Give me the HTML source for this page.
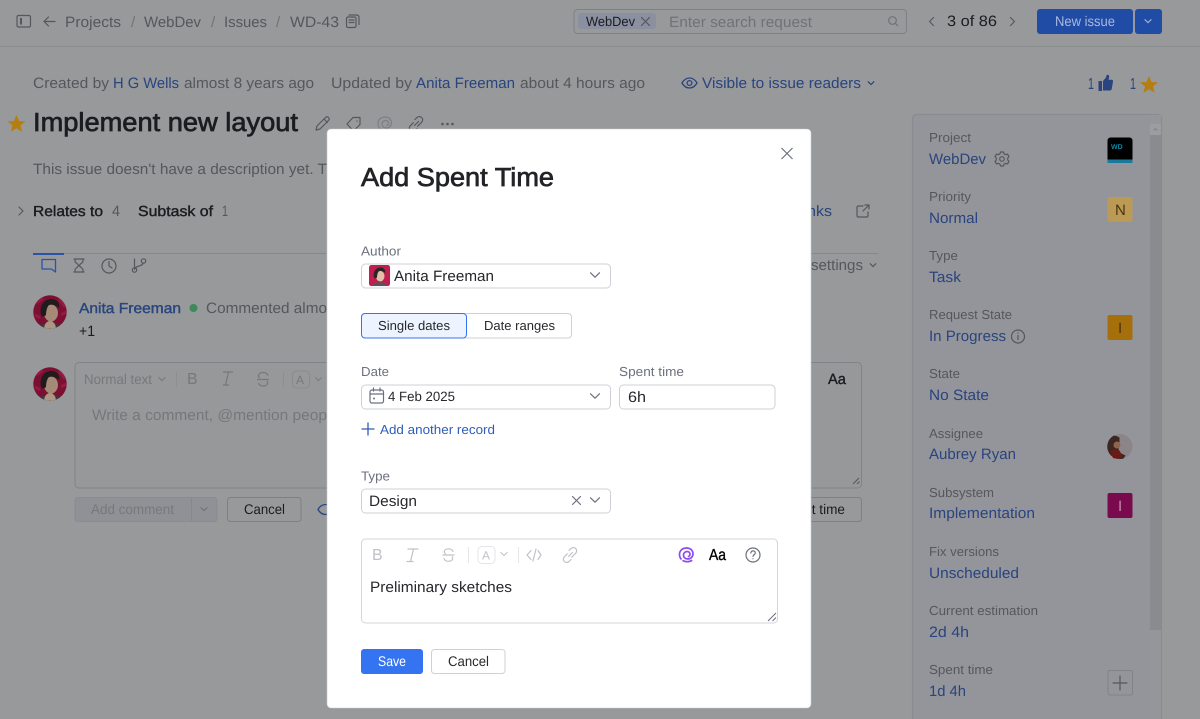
<!DOCTYPE html>
<html lang="en">
<head>
<meta charset="utf-8">
<title>Add Spent Time</title>
<style>
html,body{margin:0;padding:0;width:1200px;height:719px;overflow:hidden;background:#98999a}
svg{display:block}
text{font-family:"Liberation Sans",sans-serif;font-size:15px;fill:#47494d;text-rendering:geometricPrecision}
.d{fill:#4b4d52}.l{fill:#29447f}.g{fill:#55575c}.f{fill:#707277}.k{fill:#1b1c1f}
.b{stroke-width:.4px;paint-order:stroke}.s{font-size:14px}.t{font-size:13px}
.m{fill:#27282c}.ml{fill:#6c707e;font-size:13px}.ma{fill:#2f5cb8}
.i{fill:none;stroke:#55575c;stroke-width:1.2;stroke-linecap:round;stroke-linejoin:round}
.il{fill:none;stroke:#6f7176;stroke-width:1.2}
.ic{fill:none;stroke:#6c707e;stroke-width:1.2;stroke-linecap:round;stroke-linejoin:round}
.id{fill:none;stroke:#c0c2c8;stroke-width:1.2;stroke-linecap:round;stroke-linejoin:round}
</style>
</head>
<body>
<svg width="1200" height="719" viewBox="0 0 1200 719" xmlns="http://www.w3.org/2000/svg">
<defs>
<path id="ch" d="M-4.500-2.200L0 2.200 4.500-2.200"/>
<polygon id="star" points="0,-9 2.600,-2.900 9,-2.800 4,1.400 5.600,7.700 0,4.200 -5.600,7.700 -4,1.400 -9,-2.800 -2.600,-2.900" fill="#b57f10"/>
<path id="spi" d="M3 12.500C1.500 11 1 9.500 1 7.500 1 3.500 4 1 8 1c3.800 0 6.500 2.500 6.500 5.800 0 3-2.300 5.200-5.200 5.200-2.500 0-4.300-1.600-4.300-3.900C5 6 6.700 4.500 8.600 4.500c1.600 0 2.900 1.100 2.900 2.700 0 1.300-1 2.300-2.300 2.300M4 13.300c1.200.9 2.800 1.400 4.700 1.400 2 0 3.800-.6 5-1.500"/>
<path id="lnk" d="M6.500 9.500l4-4M7 3.500l2-2c1.500-1.300 3.500-1.200 4.700 0s1.300 3.200 0 4.700l-4 4M9 12.500l-2 2c-1.500 1.300-3.500 1.200-4.700 0S1 11.300 2.300 9.800l3-3"/>
<g id="face">
<rect width="34" height="34" fill="#7c1032"/>
<path d="M3 8L10 3M26 4l6 8M2 20l5 3M28 20l5-3" stroke="#931a41" stroke-width="3"/>
<path d="M5 34c1-5 6-6 12-6s11 1 12 6z" fill="#39393d"/>
<path d="M11 34c0-5 3-8 6-8s6 3 6 8z" fill="#ad9684"/>
<ellipse cx="18" cy="18" rx="7" ry="8.500" fill="#a58a78"/>
<path d="M8 20C6 11 11 4 18 4c6 0 9 4 8 9-3-3-7-4-10-3-2 2-3 6-3 10-2 2-4 2-5 0z" fill="#201c1d"/>
</g>
<clipPath id="c1"><circle cx="17" cy="17" r="16.700"/></clipPath>
<clipPath id="c2"><rect width="34" height="34" rx="4"/></clipPath>
</defs>

<!-- page background -->
<rect width="1200" height="719" fill="#98999a"/>
<rect y="46" width="1200" height="1" fill="#8b8c8e"/>

<!-- top bar -->
<rect class="i" x="17" y="15.500" width="13.500" height="11.500" rx="1.500"/><rect x="20" y="18" width="2" height="6.500" fill="#55575c"/>
<path class="i" d="M55 21.500H44M48.500 17L44 21.500 48.500 26"/>
<text class="g" x="65" y="27" textLength="56" lengthAdjust="spacingAndGlyphs">Projects</text>
<text class="f" x="131" y="27">/</text>
<text class="g" x="144" y="27" textLength="57" lengthAdjust="spacingAndGlyphs">WebDev</text>
<text class="f" x="211" y="27">/</text>
<text class="g" x="224" y="27" textLength="43" lengthAdjust="spacingAndGlyphs">Issues</text>
<text class="f" x="276" y="27">/</text>
<text class="g" x="290" y="27" textLength="49" lengthAdjust="spacingAndGlyphs">WD-43</text>
<rect class="i" x="346.500" y="17" width="9.500" height="10.500" rx="1.500"/><path class="i" d="M349 15h7.500q2.500 0 2.500 2.500v7M349 20h5M349 22.500h5"/>

<rect x="574" y="9.500" width="332.500" height="24" rx="3.500" fill="#98999b" stroke="#7f8184"/>
<rect x="578" y="13" width="78" height="16" rx="3" fill="#8a90a0"/>
<text class="k" x="586" y="26" style="font-size:13.500px" textLength="49" lengthAdjust="spacingAndGlyphs">WebDev</text>
<path class="i" d="M641.500 17.500l8 8M649.500 17.500l-8 8"/>
<text class="f" x="669" y="27" textLength="143" lengthAdjust="spacingAndGlyphs">Enter search request</text>
<circle class="il" cx="892.500" cy="20.500" r="3.800"/><path class="il" d="M895.300 23.300L898 26"/>

<path class="i" d="M933.500 17.500l-4 4 4 4"/>
<text class="k" x="947" y="26" textLength="50" lengthAdjust="spacingAndGlyphs">3 of 86</text>
<path class="i" d="M1010.500 17.500l4 4-4 4"/>

<rect x="1037" y="9" width="96" height="25" rx="3" fill="#204ca6"/>
<rect x="1135" y="9" width="27" height="25" rx="3" fill="#204ca6"/>
<text x="1055" y="26" style="fill:#a9b9dd;font-size:14px" textLength="60" lengthAdjust="spacingAndGlyphs">New issue</text>
<use href="#ch" transform="translate(1148 21) scale(.75)" fill="none" stroke="#a9b9dd" stroke-width="1.500"/>

<!-- meta row -->
<text class="g" x="33" y="88" textLength="76" lengthAdjust="spacingAndGlyphs">Created by</text>
<text class="l" x="113" y="88" textLength="66" lengthAdjust="spacingAndGlyphs">H G Wells</text>
<text class="g" x="184" y="88" textLength="130" lengthAdjust="spacingAndGlyphs">almost 8 years ago</text>
<text class="g" x="331" y="88" textLength="81" lengthAdjust="spacingAndGlyphs">Updated by</text>
<text class="l" x="416" y="88" textLength="99" lengthAdjust="spacingAndGlyphs">Anita Freeman</text>
<text class="g" x="520" y="88" textLength="125" lengthAdjust="spacingAndGlyphs">about 4 hours ago</text>
<path d="M682 83c2-3.500 4.500-5 7.500-5s5.500 1.500 7.500 5c-2 3.500-4.500 5-7.500 5s-5.500-1.500-7.500-5z" fill="none" stroke="#29447f" stroke-width="1.300"/><circle cx="689.500" cy="83" r="2.400" fill="none" stroke="#29447f" stroke-width="1.300"/>
<text class="l" x="702" y="88" textLength="159" lengthAdjust="spacingAndGlyphs">Visible to issue readers</text>
<use href="#ch" transform="translate(871 83) scale(.7)" fill="none" stroke="#29447f" stroke-width="1.800"/>
<text class="l" x="1088" y="89" style="font-size:16px" textLength="6" lengthAdjust="spacingAndGlyphs">1</text>
<path d="M1098.500 81h3.500v10h-3.500zM1103 81l3-3.500c.3-2 .7-2.800 1.700-2.800 1.300 0 1.800 1.500 1.300 3.300l-.5 1.800h3.200c1 0 1.500.8 1.300 1.800l-1.300 7.400c-.2 1-.8 1.500-1.700 1.500h-7z" fill="#29447f"/>
<text class="l" x="1130" y="89" style="font-size:16px" textLength="6" lengthAdjust="spacingAndGlyphs">1</text>
<use href="#star" x="1149" y="85"/>

<!-- title -->
<use href="#star" x="16.500" y="124"/>
<text class="k b" x="33" y="131" style="font-size:26px;stroke:#1b1c1f;stroke-width:.7px" textLength="265" lengthAdjust="spacingAndGlyphs">Implement new layout</text>
<path class="i" d="M316 130l1-4 8.500-8.500c1-1 2-1 3 0s1 2 0 3L320 129zM324 119l3.500 3.500"/>
<path class="i" d="M347 124l6-6.500h7v7l-6.500 6.500zM357 121v.1"/>
<use href="#spi" x="377" y="116" fill="none" stroke="#7c7e83" stroke-width="1.200"/>
<use href="#lnk" x="408" y="116" class="i"/>
<circle cx="442.500" cy="124" r="1.300" fill="#55575c"/><circle cx="447.500" cy="124" r="1.300" fill="#55575c"/><circle cx="452.500" cy="124" r="1.300" fill="#55575c"/>

<text class="g" x="33" y="174" textLength="294" lengthAdjust="spacingAndGlyphs">This issue doesn't have a description yet. T</text>

<path class="i" d="M19 207l4 4-4 4"/>
<text class="k b" x="33" y="216" style="font-size:14.500px;stroke:#1b1c1f" textLength="70" lengthAdjust="spacingAndGlyphs">Relates to</text>
<text class="g" x="112" y="216" textLength="8" lengthAdjust="spacingAndGlyphs">4</text>
<text class="k b" x="138" y="216" style="font-size:14.500px;stroke:#1b1c1f" textLength="75" lengthAdjust="spacingAndGlyphs">Subtask of</text>
<text class="g" x="222" y="216" textLength="6" lengthAdjust="spacingAndGlyphs">1</text>
<text class="l" x="800" y="216" textLength="32" lengthAdjust="spacingAndGlyphs">links</text>
<path class="i" d="M863 206h-4.500q-1.500 0-1.500 1.500v8q0 1.500 1.500 1.500h8q1.500 0 1.500-1.500V212M863 211l6-6M865 205h4v4"/>

<!-- tabs -->
<rect x="33" y="253" width="845" height="1" fill="#87888a"/>
<rect x="33" y="253" width="31" height="2" fill="#2a53a8"/>
<path d="M42 259.500h13.500v12.500l-4-3H42z" fill="none" stroke="#2a53a8" stroke-width="1.300" stroke-linejoin="round"/>
<path class="i" d="M74 259h10M74 272h10M75 259v2c0 2 3.500 3 3.500 4.500S75 268 75 270v2M83 259v2c0 2-3.500 3-3.500 4.500S83 268 83 270v2"/>
<circle class="i" cx="109" cy="266" r="7"/><path class="i" d="M109 261.500V266l3 2"/>
<circle class="i" cx="134.500" cy="270" r="2.200"/><circle class="i" cx="143.500" cy="261" r="2.200"/><path class="i" d="M134.500 259v8.500M143 263.500c-.5 3-8 2-8.500 6"/>
<text class="g" x="811" y="270" textLength="52" lengthAdjust="spacingAndGlyphs">settings</text>
<use href="#ch" transform="translate(873 265) scale(.7)" fill="none" stroke="#55575c" stroke-width="1.800"/>

<!-- comment -->
<g transform="translate(33 295)" clip-path="url(#c1)"><use href="#face"/></g>
<text class="b" x="79" y="313" style="font-size:14.500px;fill:#29447f;stroke:#29447f" textLength="102" lengthAdjust="spacingAndGlyphs">Anita Freeman</text>
<circle cx="193.500" cy="308" r="4" fill="#3b8a57"/>
<text class="g" x="206" y="313" textLength="121" lengthAdjust="spacingAndGlyphs">Commented almo</text>
<text class="k" x="79" y="336" textLength="16" lengthAdjust="spacingAndGlyphs">+1</text>

<g transform="translate(33 367)" clip-path="url(#c1)"><use href="#face"/></g>
<rect x="75" y="362.500" width="786.500" height="125.500" rx="4" fill="#979899" stroke="#818386"/>
<text x="84" y="384" class="s" style="fill:#76787c" textLength="68" lengthAdjust="spacingAndGlyphs">Normal text</text>
<use href="#ch" transform="translate(162 379) scale(.75)" fill="none" stroke="#76787c" stroke-width="1.400"/>
<rect x="176" y="372" width="1" height="15" fill="#8d8e90"/>
<text x="187" y="384" style="fill:#76787c;font-size:16px">B</text>
<path d="M223 372h10M228.500 372l-3 13M223 385h6" fill="none" stroke="#76787c" stroke-width="1.200"/>
<path d="M268 375.500c-.8-2-2.800-3-5-3-2.600 0-4.500 1.200-4.500 3.200 0 1 .4 1.800 1.200 2.300M257 379.500h12M258.500 383c.5 1.800 2.300 3 4.500 3 2.600 0 4.500-1.200 4.500-3.200 0-.8-.2-1.300-.6-1.800" fill="none" stroke="#76787c" stroke-width="1.200"/>
<rect x="283" y="372" width="1" height="15" fill="#8d8e90"/>
<rect x="292.500" y="371" width="17" height="17" rx="4" fill="none" stroke="#8a8b8d"/>
<text x="296" y="384" style="fill:#76787c;font-size:12px">A</text>
<use href="#ch" transform="translate(318.500 379) scale(.7)" fill="none" stroke="#76787c" stroke-width="1.400"/>
<text x="92" y="420" style="fill:#75777c" textLength="235" lengthAdjust="spacingAndGlyphs">Write a comment, @mention peop</text>
<text class="k" x="828" y="384" style="font-size:15px;stroke:#1b1c1f;stroke-width:.35px" textLength="18" lengthAdjust="spacingAndGlyphs">Aa</text>
<path d="M853 484l6-6M857 484l2.500-2.500" stroke="#55575c" stroke-width="1"/>

<rect x="75" y="497.500" width="142" height="24" rx="3" fill="#909196" stroke="#8a8c90"/>
<rect x="191" y="498" width="1" height="23" fill="#85878a"/>
<text x="91" y="514" class="s" style="fill:#76787c" textLength="83" lengthAdjust="spacingAndGlyphs">Add comment</text>
<use href="#ch" transform="translate(204 509) scale(.75)" fill="none" stroke="#6e7074" stroke-width="1.400"/>
<rect x="227.500" y="497.500" width="73.500" height="24" rx="3" fill="#98999a" stroke="#7e8084"/>
<text class="k s" x="244" y="514" textLength="41" lengthAdjust="spacingAndGlyphs">Cancel</text>
<path d="M318 509.500c2-3.500 4.500-5 7.500-5s5.500 1.500 7.500 5c-2 3.500-4.500 5-7.500 5s-5.500-1.500-7.500-5z" fill="none" stroke="#29447f" stroke-width="1.300"/>
<rect x="780" y="497.500" width="81.500" height="24" rx="3" fill="#98999a" stroke="#7e8084"/>
<text class="k s" x="780" y="514" textLength="65" lengthAdjust="spacingAndGlyphs">Spent time</text>

<!-- sidebar -->
<rect x="912.500" y="114.500" width="249" height="620" rx="4" fill="#94959a" stroke="#8a8b90" stroke-width="1.200"/>
<rect x="1150" y="115" width="11" height="604" fill="#95969a"/>
<rect x="1150" y="124" width="11" height="11" fill="#9c9da1"/>
<path d="M1152.500 130.500l3-3 3 3z" fill="#8a8b8f"/>
<rect x="1150" y="135" width="11" height="495" fill="#8a8b8f"/>

<text class="g t" x="929" y="142" textLength="42" lengthAdjust="spacingAndGlyphs">Project</text>
<text class="l" x="929" y="164" textLength="57" lengthAdjust="spacingAndGlyphs">WebDev</text>
<g class="i"><circle cx="1002" cy="159" r="2.300"/><path d="M1000.500 152h3l.5 1.800 1.700.9 1.800-.6 1.500 2.600-1.300 1.300v2l1.300 1.300-1.500 2.600-1.800-.6-1.700.9-.5 1.800h-3l-.5-1.800-1.700-.9-1.800.6-1.500-2.600 1.300-1.300v-2l-1.300-1.300 1.500-2.600 1.800.6 1.700-.9z"/></g>
<rect x="1107.500" y="137.500" width="25" height="25.500" rx="3" fill="#000"/>
<rect x="1107.500" y="159.500" width="25" height="3.500" fill="#1a7a9c"/>
<text x="1111" y="149" style="font-size:7px;font-weight:bold;fill:#0f86a8">WD</text>

<text class="g t" x="929" y="201" textLength="42" lengthAdjust="spacingAndGlyphs">Priority</text>
<text class="l" x="929" y="223" textLength="49" lengthAdjust="spacingAndGlyphs">Normal</text>
<rect x="1107.500" y="197" width="25" height="25" rx="2" fill="#bb9a55"/>
<text x="1115" y="215" style="fill:#4a3510;font-size:15px">N</text>

<text class="g t" x="929" y="260" textLength="29" lengthAdjust="spacingAndGlyphs">Type</text>
<text class="l" x="929" y="282" textLength="32" lengthAdjust="spacingAndGlyphs">Task</text>

<text class="g t" x="929" y="319" textLength="83" lengthAdjust="spacingAndGlyphs">Request State</text>
<text class="l" x="929" y="341" textLength="77" lengthAdjust="spacingAndGlyphs">In Progress</text>
<circle class="i" cx="1018" cy="336.500" r="6.500"/><path class="i" d="M1018 335.500v4M1018 333v.1"/>
<rect x="1107.500" y="315" width="25" height="25" rx="2" fill="#a56f0b"/>
<text x="1118" y="333" style="fill:#4d3408;font-size:15px">I</text>

<text class="g t" x="929" y="378" textLength="31" lengthAdjust="spacingAndGlyphs">State</text>
<text class="l" x="929" y="400" textLength="60" lengthAdjust="spacingAndGlyphs">No State</text>

<text class="g t" x="929" y="438" textLength="54" lengthAdjust="spacingAndGlyphs">Assignee</text>
<text class="l" x="929" y="459" textLength="87" lengthAdjust="spacingAndGlyphs">Aubrey Ryan</text>
<circle cx="1120" cy="446.500" r="12.500" fill="#8c8587"/>
<path d="M1114 435.500a12.500 12.500 0 0 0-2.500 20.500c4 3 9 3.500 12 2.500l2-3-6-3-1-4 1-5 0-6a12 12 0 0 0-5.500-2z" fill="#3c2723"/>
<path d="M1110 451l5-2 5 2 2 6-4 2-5-1z" fill="#6c1a14"/><circle cx="1117" cy="445" r="3.500" fill="#8e6650"/>

<text class="g t" x="929" y="497" textLength="65" lengthAdjust="spacingAndGlyphs">Subsystem</text>
<text class="l" x="929" y="518" textLength="106" lengthAdjust="spacingAndGlyphs">Implementation</text>
<rect x="1107.500" y="493" width="25" height="25" rx="2" fill="#7a0a4e"/>
<text x="1118" y="511" style="fill:#c28aaa;font-size:15px">I</text>

<text class="g t" x="929" y="556" textLength="70" lengthAdjust="spacingAndGlyphs">Fix versions</text>
<text class="l" x="929" y="578" textLength="90" lengthAdjust="spacingAndGlyphs">Unscheduled</text>

<text class="g t" x="929" y="615" textLength="109" lengthAdjust="spacingAndGlyphs">Current estimation</text>
<text class="l" x="929" y="637" textLength="40" lengthAdjust="spacingAndGlyphs">2d 4h</text>

<text class="g t" x="929" y="674" textLength="64" lengthAdjust="spacingAndGlyphs">Spent time</text>
<text class="l" x="929" y="696" textLength="37" lengthAdjust="spacingAndGlyphs">1d 4h</text>
<rect x="1108" y="670.500" width="24.500" height="24.500" rx="2" fill="#94959a" stroke="#808286"/>
<path class="i" d="M1113 683h14M1120 676v14"/>

<!-- modal -->
<rect x="327" y="129" width="484" height="579" rx="4" fill="#ffffff" stroke="#c9cacf" stroke-width=".6"/>
<path d="M781.500 148l11 11M792.500 148l-11 11" fill="none" stroke="#6c707e" stroke-width="1.200"/>
<text class="m" x="361" y="186" style="font-size:26px;fill:#222327;stroke:#222327;stroke-width:.7px;paint-order:stroke" textLength="193" lengthAdjust="spacingAndGlyphs">Add Spent Time</text>

<text class="ml" x="361" y="255.500" textLength="40" lengthAdjust="spacingAndGlyphs">Author</text>
<rect x="361.500" y="264" width="249" height="24" rx="4" fill="#fff" stroke="#cfd1d8"/>
<g transform="translate(369 265) scale(.62)" clip-path="url(#c2)"><rect width="34" height="34" fill="#c11e4f"/><path d="M5 34c1-5 6-6 12-6s11 1 12 6z" fill="#55555c"/><ellipse cx="18" cy="18" rx="7" ry="8.500" fill="#e2bfa8"/><path d="M8 20C6 11 11 4 18 4c6 0 9 4 8 9-3-3-7-4-10-3-2 2-3 6-3 10-2 2-4 2-5 0z" fill="#2a2526"/></g>
<text class="m" x="394" y="281" textLength="100" lengthAdjust="spacingAndGlyphs">Anita Freeman</text>
<use href="#ch" x="595" y="275" class="ic"/>

<rect x="361.500" y="313.500" width="210" height="24.500" rx="3.500" fill="#fff" stroke="#cfd1d8"/>
<rect x="361.500" y="313.500" width="105" height="24.500" rx="3.500" fill="#edf3ff" stroke="#3574f0"/>
<text class="m t" x="378" y="330" textLength="72" lengthAdjust="spacingAndGlyphs">Single dates</text>
<text class="m t" x="484" y="330" textLength="71" lengthAdjust="spacingAndGlyphs">Date ranges</text>

<text class="ml" x="361" y="376" textLength="28" lengthAdjust="spacingAndGlyphs">Date</text>
<text class="ml" x="619" y="376" textLength="65" lengthAdjust="spacingAndGlyphs">Spent time</text>
<rect x="361.500" y="385" width="249" height="24" rx="4" fill="#fff" stroke="#cfd1d8"/>
<rect class="ic" x="370" y="390" width="13.500" height="13" rx="2"/><path class="ic" d="M370 394h13.500M373.500 388v3M380 388v3"/><circle cx="374" cy="398.500" r="1" fill="#6c707e"/>
<text class="m" x="388" y="401" style="font-size:13.500px" textLength="67" lengthAdjust="spacingAndGlyphs">4 Feb 2025</text>
<use href="#ch" x="595" y="396" class="ic"/>
<rect x="619.500" y="385" width="155.500" height="24" rx="4" fill="#fff" stroke="#cfd1d8"/>
<text class="m" x="628" y="402" textLength="18" lengthAdjust="spacingAndGlyphs">6h</text>

<path d="M361.500 429h13M368 422.500v13" fill="none" stroke="#2f5cb8" stroke-width="1.300"/>
<text class="ma t" x="380" y="434" textLength="115" lengthAdjust="spacingAndGlyphs">Add another record</text>

<text class="ml" x="361" y="480.500" textLength="29" lengthAdjust="spacingAndGlyphs">Type</text>
<rect x="361.500" y="489" width="249" height="24" rx="4" fill="#fff" stroke="#cfd1d8"/>
<text class="m" x="369" y="506" textLength="48" lengthAdjust="spacingAndGlyphs">Design</text>
<path class="ic" d="M572.500 496.500l8 8M580.500 496.500l-8 8"/>
<use href="#ch" x="595" y="500" class="ic"/>

<rect x="361.500" y="539" width="416" height="84" rx="4" fill="#fff" stroke="#d3d5db"/>
<text x="372" y="560" style="fill:#c0c2c8;font-size:16px">B</text>
<path class="id" d="M408 549h10M413.500 549l-3 12.500M407 561.500h6"/>
<path class="id" d="M453 551.500c-.7-1.700-2.500-2.700-4.500-2.700-2.400 0-4.200 1.100-4.200 2.900 0 1 .4 1.600 1 2.100M443 555h11M444 558.500c.5 1.700 2.200 2.800 4.500 2.800 2.400 0 4.200-1.100 4.200-2.900 0-.7-.2-1.200-.5-1.600"/>
<rect x="468" y="547" width="1" height="16" fill="#e6e7ea"/>
<rect x="478" y="546.500" width="17" height="17" rx="4" fill="none" stroke="#e4e5e9"/>
<text x="482" y="559.500" style="fill:#c0c2c8;font-size:12px">A</text>
<use href="#ch" transform="translate(504 554) scale(.7)" class="id" style="stroke-width:1.500"/>
<rect x="518" y="547" width="1" height="16" fill="#e6e7ea"/>
<path class="id" d="M531 550.500l-4 4.500 4 4.500M538 550.500l3 4.500-3 4.500M536 549l-3 12"/>
<use href="#lnk" x="562" y="547" class="id"/>
<use href="#spi" x="678.500" y="547" fill="none" stroke="#8b4cf0" stroke-width="1.700"/>
<text x="709" y="560" style="fill:#000;font-size:16px;stroke:#000;stroke-width:.35px" textLength="17" lengthAdjust="spacingAndGlyphs">Aa</text>
<circle class="ic" cx="753" cy="555" r="7"/><path class="ic" d="M750.800 553c.3-1.500 1.200-2.100 2.300-2.100 1.300 0 2.200.9 2.200 2 0 1.700-2.300 1.700-2.300 3.500M753 558.700v.1"/>
<text class="m" x="370" y="592" textLength="142" lengthAdjust="spacingAndGlyphs">Preliminary sketches</text>
<path d="M768 621l8-8M772.500 621l3.500-3.500" stroke="#6c707e" stroke-width="1"/>

<rect x="361" y="649" width="62" height="25" rx="3" fill="#3574f0"/>
<text x="378" y="666" class="s" style="fill:#fff" textLength="28" lengthAdjust="spacingAndGlyphs">Save</text>
<rect x="431.500" y="649.500" width="73.500" height="24" rx="3" fill="#fff" stroke="#cfd1d8"/>
<text class="m s" x="448" y="666" textLength="41" lengthAdjust="spacingAndGlyphs">Cancel</text>
</svg>
</body>
</html>
